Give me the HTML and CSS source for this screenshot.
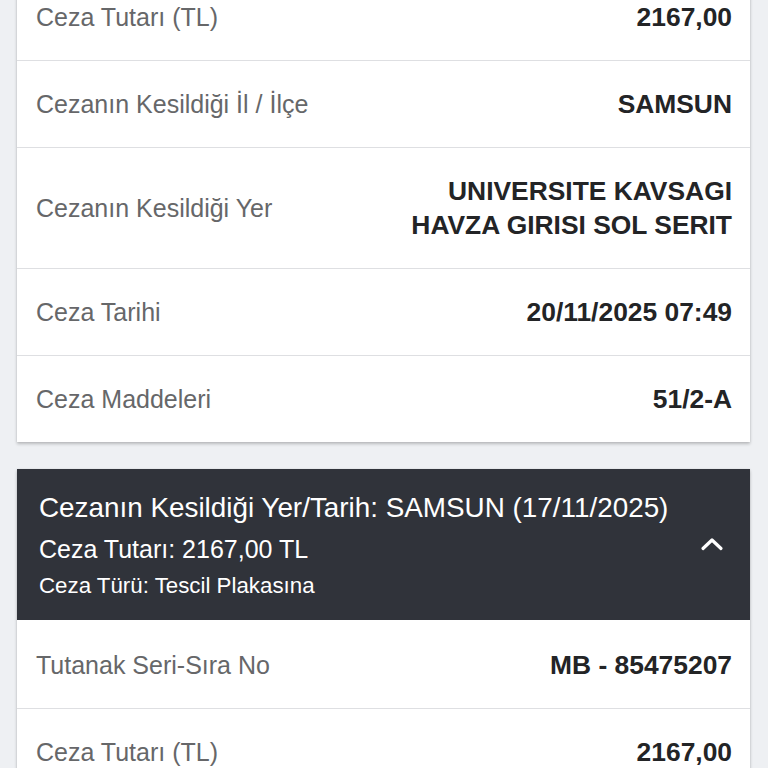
FILE: index.html
```html
<!DOCTYPE html>
<html lang="tr">
<head>
<meta charset="utf-8">
<link rel="stylesheet" href="styles.css">
</head>
<body>
<div class="page">
  <section class="card card-first">
    <div class="row"><span class="label">Ceza Tutarı (TL)</span><span class="value">2167,00</span></div>
    <div class="row"><span class="label">Cezanın Kesildiği İl / İlçe</span><span class="value">SAMSUN</span></div>
    <div class="row"><span class="label">Cezanın Kesildiği Yer</span><span class="value">UNIVERSITE KAVSAGI HAVZA GIRISI SOL SERIT</span></div>
    <div class="row"><span class="label">Ceza Tarihi</span><span class="value">20/11/2025 07:49</span></div>
    <div class="row"><span class="label">Ceza Maddeleri</span><span class="value">51/2-A</span></div>
  </section>

  <section class="card">
    <div class="head">
      <div class="head-text">
        <div class="head-title">Cezanın Kesildiği Yer/Tarih: SAMSUN (17/11/2025)</div>
        <div class="head-amount">Ceza Tutarı: 2167,00 TL</div>
        <div class="head-type">Ceza Türü: Tescil Plakasına</div>
      </div>
      <svg class="chevron" width="24" height="16" viewBox="0 0 24 16" aria-hidden="true">
        <polyline points="3,12.5 12,4 21,12.5" fill="none" stroke="#ffffff" stroke-width="3.2" stroke-linecap="round" stroke-linejoin="round"/>
      </svg>
    </div>
    <div class="row"><span class="label">Tutanak Seri-Sıra No</span><span class="value">MB - 85475207</span></div>
    <div class="row"><span class="label">Ceza Tutarı (TL)</span><span class="value">2167,00</span></div>
    <div class="row"><span class="label">Cezanın Kesildiği İl / İlçe</span><span class="value">SAMSUN</span></div>
  </section>
</div>
</body>
</html>
```
FILE: styles.css
```css
html, body {
  margin: 0;
  padding: 0;
  background: #eef0f3;
  font-family: "Liberation Sans", Arial, sans-serif;
  overflow: hidden;
}

.page {
  padding: 0 18px 0 17px;
  display: flex;
  flex-direction: column;
  gap: 27px;
}

.card {
  background: #ffffff;
  box-shadow: 0 2px 3px rgba(0, 0, 0, 0.22), 0 0 2px rgba(0, 0, 0, 0.08);
}

.card-first {
  margin-top: -26px;
}

.row {
  display: flex;
  align-items: center;
  justify-content: space-between;
  padding: 26px 18px 26px 19px;
  border-bottom: 1px solid #dedfe2;
  line-height: 34px;
}

.row:last-child {
  border-bottom: none;
}

.head + .row {
  padding-top: 28px;
}

.label {
  font-size: 25px;
  color: #666769;
}

.value {
  font-size: 26.4px;
  font-weight: bold;
  color: #232426;
  text-align: right;
  max-width: 50%;
}

.head {
  background: #30333a;
  color: #ffffff;
  display: flex;
  align-items: center;
  justify-content: space-between;
  padding: 21px 26px 20px 22px;
}

.head-title {
  font-size: 27.85px;
  line-height: 36px;
}

.head-amount {
  font-size: 25px;
  line-height: 30px;
  margin-top: 8px;
}

.head-type {
  font-size: 22.3px;
  line-height: 28px;
  margin-top: 8px;
}

.chevron {
  flex: none;
  margin-top: -3px;
}
```
